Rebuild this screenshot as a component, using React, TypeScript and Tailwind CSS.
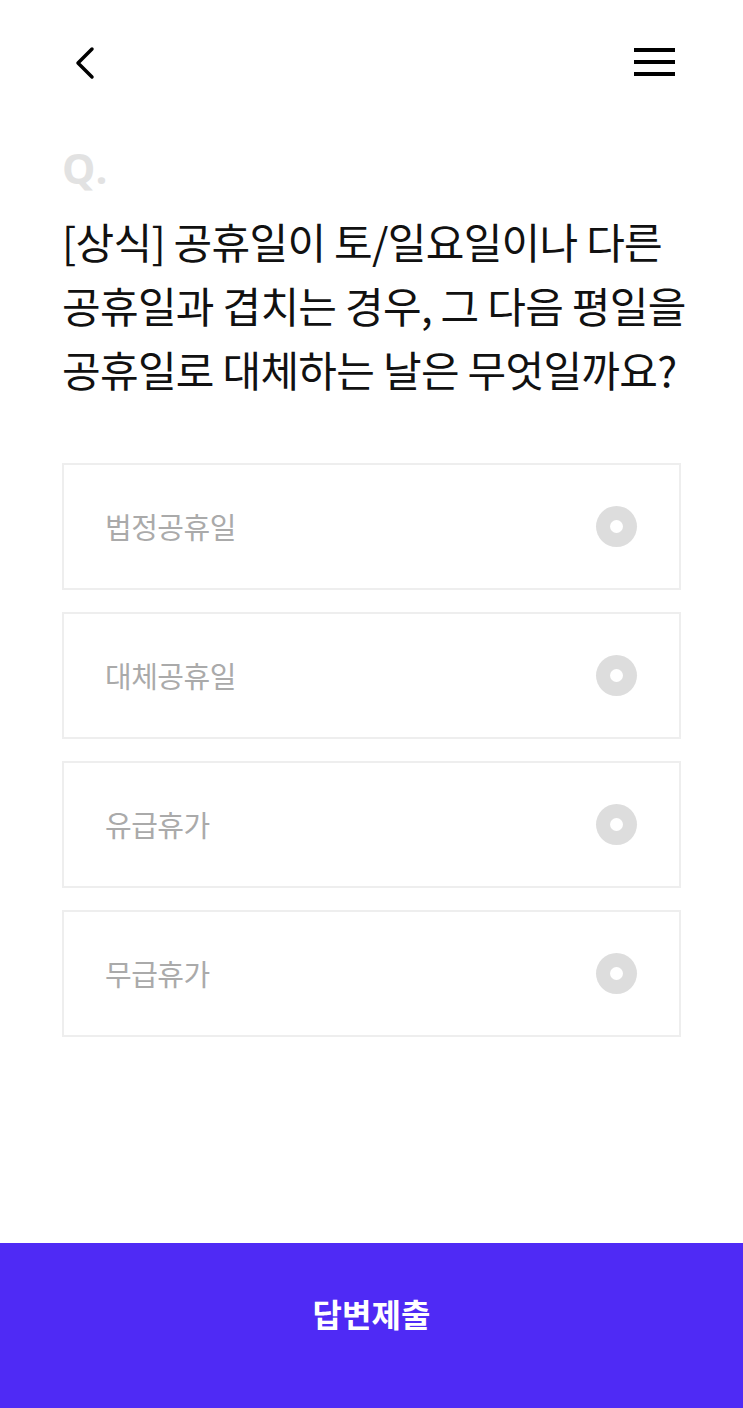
import React from "react";

const options = ["법정공휴일", "대체공휴일", "유급휴가", "무급휴가"];

export default function App() {
  return (
    <div
      className="flex min-h-screen flex-col bg-white"
      style={{ fontFamily: '"Noto Sans CJK KR", "Noto Sans", sans-serif' }}
    >
      <header className="flex h-[125px] items-start justify-between px-[62px] pt-[46px]">
        <svg width="36" height="34" viewBox="0 0 36 34" className="ml-[8px]">
          <path d="M22 3 L8 17 L22 31" fill="none" stroke="#000" strokeWidth="3.5" strokeLinecap="round" strokeLinejoin="round" />
        </svg>
        <svg width="44" height="32" viewBox="0 0 44 32" className="mr-[4px]">
          <rect x="1" y="2" width="41" height="4" fill="#000" />
          <rect x="1" y="14" width="41" height="4" fill="#000" />
          <rect x="1" y="26" width="41" height="4" fill="#000" />
        </svg>
      </header>
      <main className="flex flex-col px-[62px]">
        <div
          className="mt-[8px] h-[70px] text-[42px] font-bold leading-[70px] text-[#e2e2e2]"
          style={{ fontFamily: '"Open Sans", "Noto Sans", sans-serif' }}
        >
          Q.
        </div>
        <h1 className="mt-[6px] whitespace-nowrap text-[42px] font-normal leading-[64px] tracking-[-0.7px] text-[#111]">
          [상식] 공휴일이 토/일요일이나 다른
          <br />
          공휴일과 겹치는 경우, 그 다음 평일을
          <br />
          공휴일로 대체하는 날은 무엇일까요?
        </h1>
        <div className="mt-[62px] flex flex-col gap-[22px]">
          {options.map((o) => (
            <div
              key={o}
              className="flex h-[127px] items-center justify-between border-2 border-[#eeeeee] pl-[41px] pr-[42px]"
            >
              <span className="text-[29px] tracking-[-0.5px] text-[#aaaaaa]">{o}</span>
              <span className="flex h-[41px] w-[41px] items-center justify-center rounded-full bg-[#dddddd]">
                <span className="h-[13px] w-[13px] rounded-full bg-white" />
              </span>
            </div>
          ))}
        </div>
      </main>
      <button className="mt-auto flex h-[165px] w-full items-center justify-center bg-[#4f2af5] pb-[26px] text-[32px] font-bold text-white">
        답변제출
      </button>
    </div>
  );
}
